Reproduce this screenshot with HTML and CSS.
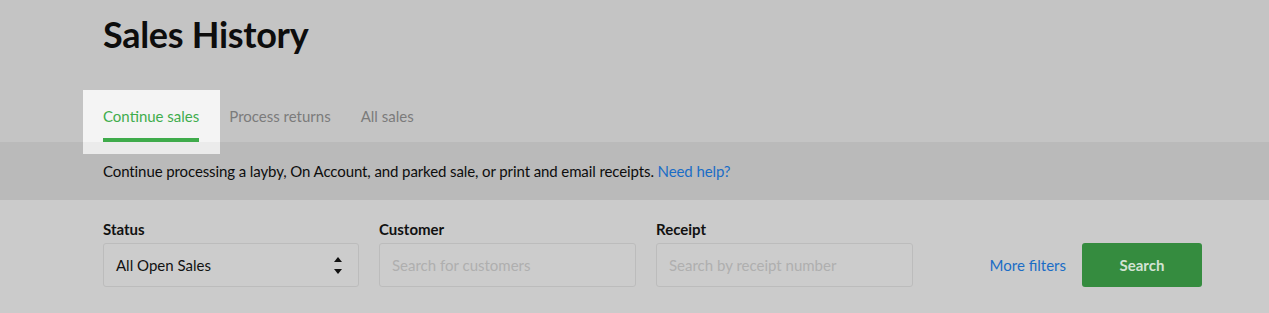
FILE: index.html
```html
<!DOCTYPE html>
<html lang="en">
<head>
    <meta charset="UTF-8">
    <meta name="viewport" content="width=device-width, initial-scale=1.0">
    <title>Sales History</title>
    <link rel="stylesheet" href="styles.css">
</head>
<body>
    <header class="page-header">
        <h1 class="page-title">Sales History</h1>
        <nav class="tabs">
            <a class="tab tab-active" href="#">Continue sales</a>
            <a class="tab" href="#">Process returns</a>
            <a class="tab" href="#">All sales</a>
        </nav>
    </header>

    <div class="info-band">
        <p>Continue processing a layby, On Account, and parked sale, or print and email receipts. <a href="#" class="link">Need help?</a></p>
    </div>

    <form class="filters">
        <div class="field">
            <label for="status">Status</label>
            <div class="select-box">
                <span>All Open Sales</span>
                <svg class="select-arrows" width="8" height="17" viewBox="0 0 8 17">
                    <path d="M4 0 L8 5 L0 5 Z" fill="#111"/>
                    <path d="M0 12 L8 12 L4 17 Z" fill="#111"/>
                </svg>
            </div>
        </div>
        <div class="field">
            <label for="customer">Customer</label>
            <input type="text" id="customer" placeholder="Search for customers">
        </div>
        <div class="field">
            <label for="receipt">Receipt</label>
            <input type="text" id="receipt" placeholder="Search by receipt number">
        </div>
        <div class="actions">
            <a href="#" class="link more-filters">More filters</a>
            <button type="submit" class="search-button">Search</button>
        </div>
    </form>
</body>
</html>
```

FILE: styles.css
```css
* {
    margin: 0;
    padding: 0;
    box-sizing: border-box;
}

body {
    font-family: 'Lato', 'Liberation Sans', sans-serif;
    background: #cbcbcb;
    color: #111;
    width: 1269px;
    height: 313px;
    overflow: hidden;
}

.page-header {
    background: #c4c4c4;
    padding: 13px 0 0 103px;
    height: 142px;
}

.page-title {
    font-size: 36px;
    font-weight: 700;
    color: #0d0d0d;
    line-height: 43px;
    letter-spacing: -0.3px;
}

.tabs {
    display: flex;
    gap: 30px;
    margin-top: 34px;
}

.tab {
    font-size: 15px;
    color: #7b7b7b;
    text-decoration: none;
    height: 52px;
    line-height: 52px;
}

.tab-active {
    position: relative;
    color: #40ad4c;
    background: #f4f4f4;
    padding: 0 21px 0 20px;
    margin: 0 -21px 0 -20px;
}

.tab-active::before {
    content: '';
    position: absolute;
    left: 20px;
    right: 21px;
    bottom: 0;
    height: 4px;
    background: #3fab4b;
}

.tab-active::after {
    content: '';
    position: absolute;
    left: 0;
    right: 0;
    top: 52px;
    height: 12px;
    background: #ebebeb;
}

.info-band {
    background: #bababa;
    height: 58px;
    padding-left: 103px;
    display: flex;
    align-items: center;
    font-size: 15px;
    letter-spacing: -0.1px;
    color: #0d0d0d;
}

.link {
    color: #1a6dc6;
    text-decoration: none;
}

.filters {
    display: flex;
    align-items: flex-end;
    gap: 20px;
    padding: 20px 0 0 103px;
    width: 1202px;
}

.field {
    display: flex;
    flex-direction: column;
    width: 257px;
}

.field label {
    font-size: 15px;
    font-weight: 700;
    color: #111;
    line-height: 19px;
    margin-bottom: 4px;
}

.select-box,
.field input {
    height: 44px;
    border: 1px solid #bcbcbc;
    border-radius: 3px;
    background: #cccccc;
    padding: 0 12px;
    font-family: inherit;
}

.select-box {
    display: flex;
    align-items: center;
    justify-content: space-between;
    font-size: 15px;
    color: #111;
    padding-right: 16px;
}

.field:first-child {
    width: 256px;
}

.field input {
    font-size: 15px;
    color: #111;
    outline: none;
}

.field input::placeholder {
    color: #afafaf;
}

.actions {
    margin-left: auto;
    display: flex;
    align-items: center;
    gap: 16px;
}

.more-filters {
    font-size: 15px;
}

.search-button {
    width: 120px;
    height: 44px;
    border: none;
    border-radius: 3px;
    background: #358c3f;
    color: #d3e3d4;
    font-family: inherit;
    font-size: 15px;
    font-weight: 700;
}
```
